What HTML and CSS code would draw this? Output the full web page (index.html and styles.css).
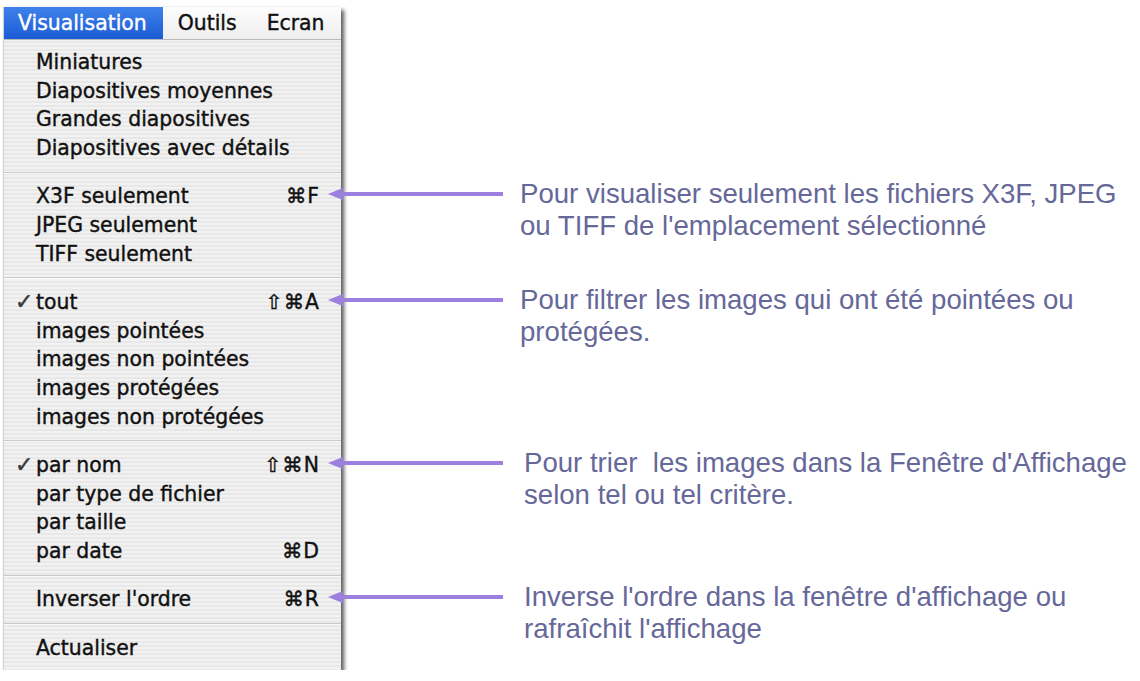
FILE: index.html
```html
<!DOCTYPE html>
<html lang="fr">
<head>
<meta charset="utf-8">
<title>Visualisation</title>
<link rel="stylesheet" href="styles.css">
</head>
<body>
<div class="stage">
  <div class="menu">
    <div class="menubar">
      <span class="title active">Visualisation</span>
      <span class="title">Outils</span>
      <span class="title">Ecran</span>
    </div>
    <div class="list">
      <div class="item"><span class="check"></span><span class="label">Miniatures</span><span class="key"></span></div>
      <div class="item"><span class="check"></span><span class="label">Diapositives moyennes</span><span class="key"></span></div>
      <div class="item"><span class="check"></span><span class="label">Grandes diapositives</span><span class="key"></span></div>
      <div class="item"><span class="check"></span><span class="label">Diapositives avec détails</span><span class="key"></span></div>
      <div class="sep"></div>
      <div class="item"><span class="check"></span><span class="label">X3F seulement</span><span class="key">⌘F</span>
        <div class="note">
          <svg class="arrow" width="175" height="32" viewBox="0 0 175 32"><path d="M12 16H175" stroke="#9c80e0" stroke-width="4"/><path d="M0 16L16 9.5L13 16L16 22.5Z" fill="#9c80e0"/></svg>
          <p class="text">Pour visualiser seulement les fichiers X3F, JPEG<br>ou TIFF de l'emplacement sélectionné</p>
        </div>
      </div>
      <div class="item"><span class="check"></span><span class="label">JPEG seulement</span><span class="key"></span></div>
      <div class="item"><span class="check"></span><span class="label">TIFF seulement</span><span class="key"></span></div>
      <div class="sep"></div>
      <div class="item"><span class="check">✓</span><span class="label">tout</span><span class="key">⇧⌘A</span>
        <div class="note">
          <svg class="arrow" width="175" height="32" viewBox="0 0 175 32"><path d="M12 16H175" stroke="#9c80e0" stroke-width="4"/><path d="M0 16L16 9.5L13 16L16 22.5Z" fill="#9c80e0"/></svg>
          <p class="text">Pour filtrer les images qui ont été pointées ou<br>protégées.</p>
        </div>
      </div>
      <div class="item"><span class="check"></span><span class="label">images pointées</span><span class="key"></span></div>
      <div class="item"><span class="check"></span><span class="label">images non pointées</span><span class="key"></span></div>
      <div class="item"><span class="check"></span><span class="label">images protégées</span><span class="key"></span></div>
      <div class="item"><span class="check"></span><span class="label">images non protégées</span><span class="key"></span></div>
      <div class="sep"></div>
      <div class="item"><span class="check">✓</span><span class="label">par nom</span><span class="key">⇧⌘N</span>
        <div class="note wide">
          <svg class="arrow" width="175" height="32" viewBox="0 0 175 32"><path d="M12 16H175" stroke="#9c80e0" stroke-width="4"/><path d="M0 16L16 9.5L13 16L16 22.5Z" fill="#9c80e0"/></svg>
          <p class="text">Pour trier&nbsp; les images dans la Fenêtre d'Affichage<br>selon tel ou tel critère.</p>
        </div>
      </div>
      <div class="item"><span class="check"></span><span class="label">par type de fichier</span><span class="key"></span></div>
      <div class="item"><span class="check"></span><span class="label">par taille</span><span class="key"></span></div>
      <div class="item"><span class="check"></span><span class="label">par date</span><span class="key">⌘D</span></div>
      <div class="sep"></div>
      <div class="item"><span class="check"></span><span class="label">Inverser l'ordre</span><span class="key">⌘R</span>
        <div class="note wide">
          <svg class="arrow" width="175" height="32" viewBox="0 0 175 32"><path d="M12 16H175" stroke="#9c80e0" stroke-width="4"/><path d="M0 16L16 9.5L13 16L16 22.5Z" fill="#9c80e0"/></svg>
          <p class="text">Inverse l'ordre dans la fenêtre d'affichage ou<br>rafraîchit l'affichage</p>
        </div>
      </div>
      <div class="sep"></div>
      <div class="item"><span class="check"></span><span class="label">Actualiser</span><span class="key"></span></div>
    </div>
  </div>
</div>
</body>
</html>
```

FILE: styles.css
```css
html, body {
  margin: 0;
  padding: 0;
  background: #ffffff;
}

.stage {
  padding: 7px 0 0 4px;
}

.menu {
  width: 337px;
  background: repeating-linear-gradient(to bottom, #f2f2f2 0, #f2f2f2 2px, #e8e8e8 2px, #e8e8e8 4px);
  box-shadow: 3px 3px 4px rgba(0, 0, 0, 0.65), -1px 0 1px rgba(0, 0, 0, 0.15);
  font-family: "DejaVu Sans", "Liberation Sans", sans-serif;
  font-size: 20.4px;
  color: #111111;
  -webkit-text-stroke: 0.4px #111111;
}

.menubar {
  display: flex;
  height: 32px;
  background: linear-gradient(to bottom, #fdfdfd, #eeeeee);
  border-bottom: 1px solid #b8b8b8;
}

.title {
  padding: 0 15px 0 15px;
  line-height: 32px;
  white-space: nowrap;
}

.title.active {
  background: linear-gradient(to bottom, #3f82ea, #1a5bd6);
  color: #ffffff;
  -webkit-text-stroke: 0.4px #ffffff;
  padding: 0 16px 0 14px;
}

.list {
  padding: 7.7px 0 8px;
}

.item {
  position: relative;
  display: grid;
  grid-template-columns: 32px 1fr auto;
  align-items: center;
  height: 28.6px;
  padding-right: 21px;
  white-space: nowrap;
}

.check {
  font-size: 22px;
  line-height: 1;
  color: #3a3a3a;
  padding-left: 11px;
  -webkit-text-stroke: 0.5px #3a3a3a;
}

.key {
  letter-spacing: 1px;
}

.sep {
  height: 20px;
  display: flex;
  align-items: center;
}

.sep::before {
  content: "";
  display: block;
  width: 100%;
  height: 1px;
  background: #c9c9c9;
  box-shadow: 0 1px 0 #fafafa;
}

.note {
  position: absolute;
  left: 324px;
  top: -4px;
  display: flex;
  align-items: flex-start;
  gap: 17px;
  -webkit-text-stroke: 0;
}

.note.wide {
  gap: 21px;
}

.arrow {
  flex: none;
  display: block;
}

.text {
  margin: 0;
  font-family: "Liberation Sans", Arial, sans-serif;
  font-size: 27.6px;
  line-height: 32px;
  color: #666899;
  white-space: nowrap;
}
```
